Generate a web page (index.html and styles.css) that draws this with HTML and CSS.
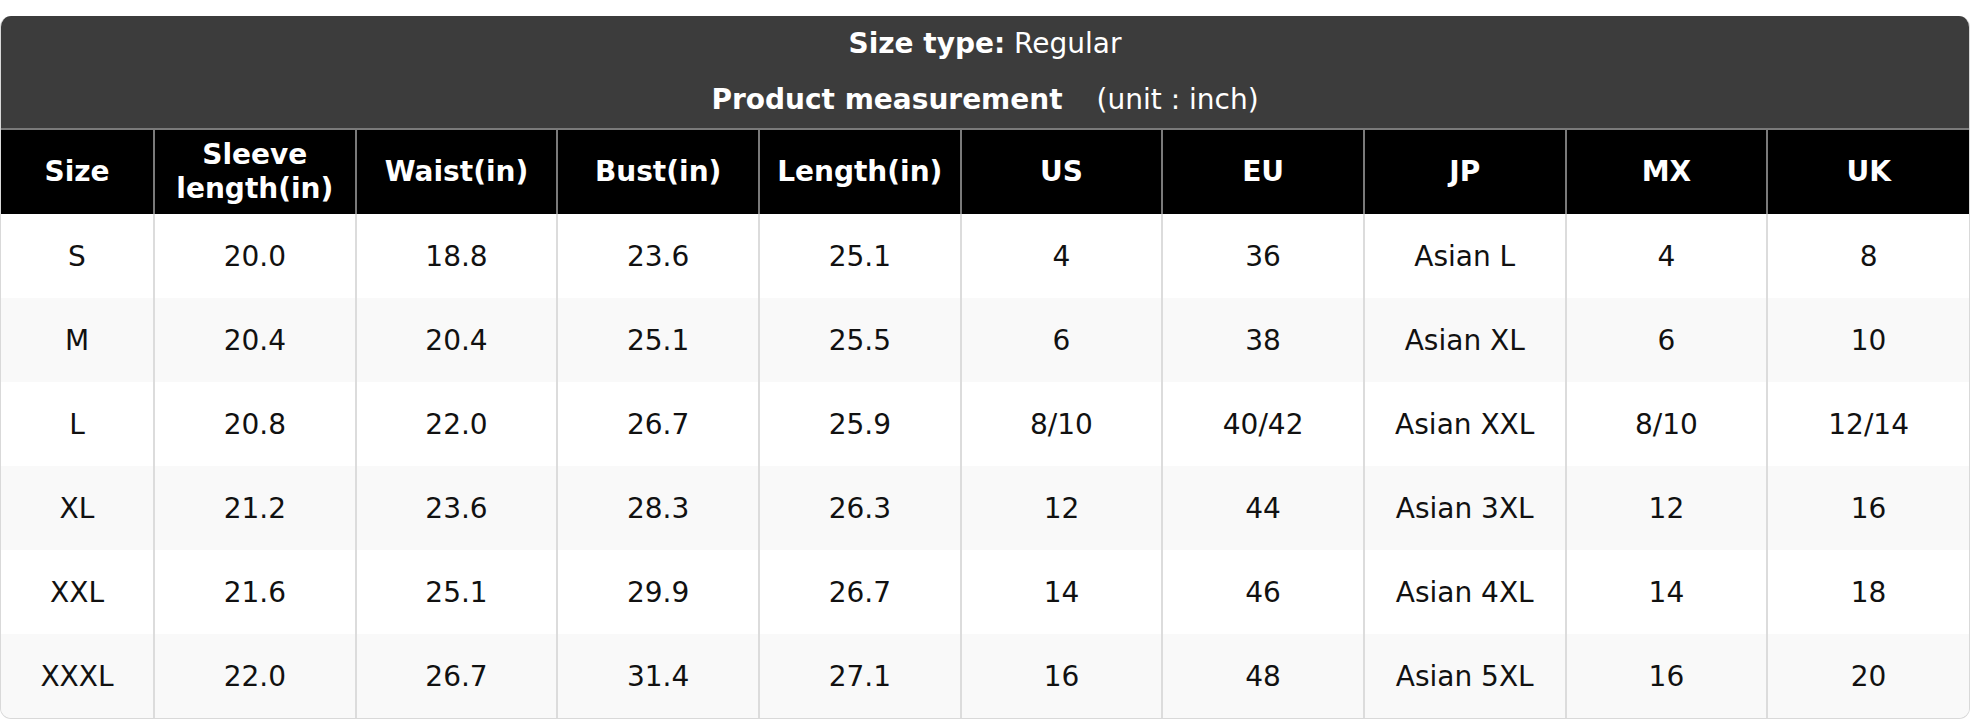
FILE: index.html
```html
<!DOCTYPE html>
<html lang="en">
<head>
<meta charset="utf-8">
<title>Size chart</title>
<link rel="stylesheet" href="styles.css">
</head>
<body>
<div class="chart">
  <div class="chart-head">
    <div class="head-line"><b>Size type:</b> Regular</div>
    <div class="head-line"><b>Product measurement</b><span class="unit">(unit : inch)</span></div>
  </div>
  <table class="size-table">
    <colgroup>
      <col class="col-size">
      <col><col><col><col><col><col><col><col><col>
    </colgroup>
    <thead>
      <tr>
        <th>Size</th>
        <th>Sleeve length(in)</th>
        <th>Waist(in)</th>
        <th>Bust(in)</th>
        <th>Length(in)</th>
        <th>US</th>
        <th>EU</th>
        <th>JP</th>
        <th>MX</th>
        <th>UK</th>
      </tr>
    </thead>
    <tbody>
      <tr><td>S</td><td>20.0</td><td>18.8</td><td>23.6</td><td>25.1</td><td>4</td><td>36</td><td>Asian L</td><td>4</td><td>8</td></tr>
      <tr><td>M</td><td>20.4</td><td>20.4</td><td>25.1</td><td>25.5</td><td>6</td><td>38</td><td>Asian XL</td><td>6</td><td>10</td></tr>
      <tr><td>L</td><td>20.8</td><td>22.0</td><td>26.7</td><td>25.9</td><td>8/10</td><td>40/42</td><td>Asian XXL</td><td>8/10</td><td>12/14</td></tr>
      <tr><td>XL</td><td>21.2</td><td>23.6</td><td>28.3</td><td>26.3</td><td>12</td><td>44</td><td>Asian 3XL</td><td>12</td><td>16</td></tr>
      <tr><td>XXL</td><td>21.6</td><td>25.1</td><td>29.9</td><td>26.7</td><td>14</td><td>46</td><td>Asian 4XL</td><td>14</td><td>18</td></tr>
      <tr><td>XXXL</td><td>22.0</td><td>26.7</td><td>31.4</td><td>27.1</td><td>16</td><td>48</td><td>Asian 5XL</td><td>16</td><td>20</td></tr>
    </tbody>
  </table>
</div>
</body>
</html>
```

FILE: styles.css
```css
html, body {
  margin: 0;
  padding: 0;
  background: #ffffff;
}

body {
  padding-top: 16px;
  font-family: "DejaVu Sans", Verdana, sans-serif;
  font-size: 28px;
  color: #111111;
}

.chart {
  box-sizing: border-box;
  width: 1970px;
  border: 1px solid #d9d9d9;
  border-top: none;
  border-radius: 11px;
  overflow: hidden;
  background: #ffffff;
}

.chart-head {
  background: #3c3c3c;
  color: #ffffff;
  text-align: center;
}

.head-line {
  height: 56px;
  line-height: 56px;
  white-space: nowrap;
}

.head-line b {
  font-weight: bold;
}

.unit {
  margin-left: 34px;
}

.size-table {
  width: 100%;
  table-layout: fixed;
  border-collapse: collapse;
  border-spacing: 0;
}

.col-size {
  width: 153px;
}

.size-table th {
  background: #000000;
  color: #ffffff;
  font-weight: bold;
  height: 85px;
  padding: 0 16px;
  line-height: 34px;
  text-align: center;
  vertical-align: middle;
  border-top: 2px solid #7a7a7a;
  border-left: 2px solid #7a7a7a;
  box-sizing: border-box;
}

.size-table td {
  height: 84px;
  padding: 0 8px;
  text-align: center;
  vertical-align: middle;
  border-left: 2px solid #dcdcdc;
  box-sizing: border-box;
}

.size-table th:first-child,
.size-table td:first-child {
  border-left: none;
}

.size-table tbody tr:nth-child(even) td {
  background: #f9f9f9;
}
```
